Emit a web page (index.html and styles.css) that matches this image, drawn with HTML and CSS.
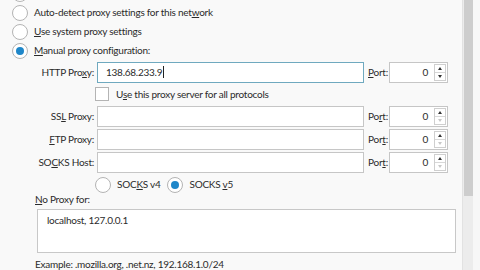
FILE: index.html
```html
<!DOCTYPE html>
<html>
<head>
<meta charset="utf-8">
<link rel="stylesheet" href="styles.css">
</head>
<body>
<div class="window">
  <div class="content">
    <div class="radios">
      <div class="opt"><span class="radio"></span></div>
      <div class="opt"><span class="radio"></span><span>Auto-detect proxy settings for this net<u>w</u>ork</span></div>
      <div class="opt"><span class="radio"></span><span><u>U</u>se system proxy settings</span></div>
      <div class="opt"><span class="radio on"></span><span><u>M</u>anual proxy configuration:</span></div>
    </div>
    <div class="proxies">
      <div class="prow">
        <span class="plabel">HTTP Pro<u>x</u>y:</span>
        <div class="field focus"><span class="val">138.68.233.9</span><span class="caret"></span></div>
        <span class="port"><u>P</u>ort:</span>
        <div class="spin"><span class="num">0</span><span class="arrows"><span class="up"></span><span class="down"></span></span></div>
      </div>
      <div class="crow"><span class="check"></span><span>U<u>s</u>e this proxy server for all protocols</span></div>
      <div class="prow">
        <span class="plabel">SS<u>L</u> Proxy:</span>
        <div class="field"></div>
        <span class="port">Po<u>r</u>t:</span>
        <div class="spin"><span class="num">0</span><span class="arrows"><span class="up"></span><span class="down dim"></span></span></div>
      </div>
      <div class="prow">
        <span class="plabel"><u>F</u>TP Proxy:</span>
        <div class="field"></div>
        <span class="port">Por<u>t</u>:</span>
        <div class="spin"><span class="num">0</span><span class="arrows"><span class="up"></span><span class="down dim"></span></span></div>
      </div>
      <div class="prow">
        <span class="plabel">SO<u>C</u>KS Host:</span>
        <div class="field"></div>
        <span class="port">Por<u>t</u>:</span>
        <div class="spin"><span class="num">0</span><span class="arrows"><span class="up"></span><span class="down dim"></span></span></div>
      </div>
      <div class="socks">
        <div class="sopt"><span class="radio"></span><span>SOC<u>K</u>S v4</span></div>
        <div class="sopt"><span class="radio on"></span><span>SOCKS <u>v</u>5</span></div>
      </div>
    </div>
    <div class="noproxy"><u>N</u>o Proxy for:</div>
    <div class="area">localhost, 127.0.0.1</div>
    <div class="example">Example: .mozilla.org, .net.nz, 192.168.1.0/24</div>
  </div>
  <div class="scrollbar"><div class="thumb"></div></div>
  <div class="edge"></div>
</div>
</body>
</html>
```
FILE: styles.css
```css
html, body {
  margin: 0;
  padding: 0;
  width: 480px;
  height: 270px;
  overflow: hidden;
  background: #f9f9f9;
}
body {
  font-family: "Lato", "Open Sans", sans-serif;
  font-size: 10px;
  letter-spacing: -0.25px;
  line-height: 13px;
  color: #2b2b2b;
}
u { text-decoration: underline; text-underline-offset: 1px; }
.window {
  display: flex;
  height: 270px;
}
.content {
  width: 462px;
  flex: none;
}
.radios {
  margin-top: -16px;
  padding-left: 12px;
}
.opt {
  height: 19px;
  display: flex;
  align-items: center;
  gap: 6px;
}
.radio {
  width: 14px;
  height: 14px;
  border: 1px solid #b4b4b4;
  border-radius: 50%;
  background: #fff;
  flex: none;
  position: relative;
}
.radio.on::after {
  content: "";
  position: absolute;
  left: 3px;
  top: 3px;
  width: 8px;
  height: 8px;
  border-radius: 50%;
  background: #1f87c9;
}
.proxies {
  margin-top: 1.5px;
}
.prow {
  display: flex;
  align-items: center;
  height: 21px;
  margin-bottom: 2px;
}
.plabel {
  width: 94px;
  text-align: right;
  flex: none;
}
.field {
  margin-left: 3px;
  width: 257px;
  height: 19px;
  border: 1px solid #c6c6c6;
  background: #fff;
  display: flex;
  align-items: center;
  padding-left: 8px;
  flex: none;
}
.field.focus { border-color: #6fa9bf; }
.caret {
  display: inline-block;
  width: 1px;
  height: 12px;
  background: #222;
  margin-left: 1px;
}
.port {
  width: 21px;
  margin-left: 4px;
  flex: none;
}
.spin {
  width: 57px;
  height: 19px;
  border: 1px solid #c6c6c6;
  background: #fff;
  display: flex;
  align-items: center;
  flex: none;
}
.num {
  flex: 1;
  text-align: right;
  padding-right: 6px;
}
.arrows {
  width: 10px;
  height: 15px;
  border: 1px solid #cfcfcf;
  margin-right: 1px;
  display: flex;
  flex-direction: column;
}
.up, .down {
  flex: 1;
  position: relative;
}
.up { border-bottom: 1px solid #d8d8d8; }
.up::after, .down::after {
  content: "";
  position: absolute;
  left: 3px;
  width: 0;
  height: 0;
  border-left: 2px solid transparent;
  border-right: 2px solid transparent;
}
.up::after { top: 2px; border-bottom: 3px solid #333; }
.down::after { top: 2px; border-top: 3px solid #333; }
.down.dim::after { border-top-color: #c8c8c8; }
.crow {
  height: 21px;
  display: flex;
  align-items: center;
  padding-left: 95px;
  gap: 7px;
  margin-top: -1px;
  margin-bottom: 1px;
}
.check {
  width: 12px;
  height: 12px;
  border: 1px solid #b4b4b4;
  background: #fff;
  flex: none;
}
.socks {
  display: flex;
  padding-left: 95px;
  gap: 7px;
  height: 20px;
  align-items: center;
  margin-top: 1px;
}
.sopt {
  display: flex;
  align-items: center;
  gap: 6px;
}
.noproxy {
  margin-top: -2px;
  padding-left: 35px;
  height: 13px;
}
.area {
  margin: 3px 0 0 37px;
  width: 408px;
  height: 38px;
  border: 1px solid #c8c8c8;
  background: #fff;
  padding: 4px 0 0 9px;
}
.example {
  margin-top: 5px;
  padding-left: 35px;
}
.scrollbar {
  width: 11px;
  background: #ececec;
  border-left: 1px solid #e2e2e2;
  flex: none;
  padding-left: 1px;
  box-sizing: border-box;
}
.thumb {
  width: 9px;
  height: 196px;
  background: #cdcdcd;
}
.edge {
  flex: 1;
  background: #f7f7f7;
}
```
